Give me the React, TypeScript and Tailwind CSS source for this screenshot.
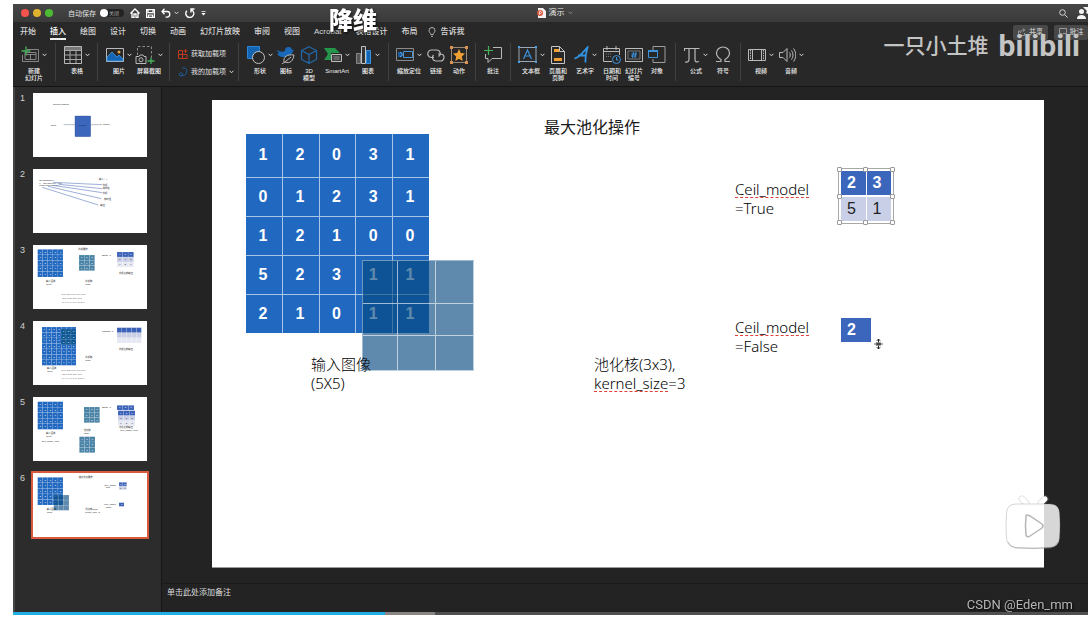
import type { ReactNode } from 'react'

type IconItem = {
  label: string[]
  icon: ReactNode
  width: string
  menu?: boolean
}

const tabs = ['开始', '插入', '绘图', '设计', '切换', '动画', '幻灯片放映', '审阅', '视图', 'Acrobat', '表格设计', '布局']

const inputGrid = [
  [1, 2, 0, 3, 1],
  [0, 1, 2, 3, 1],
  [1, 2, 1, 0, 0],
  [5, 2, 3, 1, 1],
  [2, 1, 0, 1, 1],
]

const played = 34.6
const buffered = 39.3

function Icon({ children, w = 18 }: { children: ReactNode; w?: number }) {
  return (
    <svg width={w} height={18} viewBox={`0 0 ${w} 18`} fill="none" stroke="#b9b9b9" strokeWidth="1" aria-hidden="true">
      {children}
    </svg>
  )
}

function Chevron({ color = '#d8d8d8' }: { color?: string }) {
  return (
    <svg width="5" height="4" viewBox="0 0 5 4" fill="none" stroke={color} aria-hidden="true">
      <path d="M.6 .8 2.5 2.8 4.4 .8" />
    </svg>
  )
}

const newSlide: IconItem = {
  label: ['新建', '幻灯片'],
  width: 'w-[34px]',
  menu: true,
  icon: (
    <Icon>
      <path d="M6 3.5h11.5v12H1.5V9M4 13V6.500h11v7H4M4 8.500h11M9.500 8.500v5" stroke="#858585" />
      <path d="M5 .5v9M.5 5h9" stroke="#45b35c" strokeWidth="1.300" />
    </Icon>
  ),
}

const tableItem: IconItem = {
  label: ['表格'],
  width: 'w-[34px]',
  menu: true,
  icon: (
    <Icon>
      <path d="M.5 .5h17v17H.5z" />
      <path d="M1 1h16v3H1z" fill="#777" stroke="none" />
      <path d="M.5 4.500h17M.5 9h17M.5 13.500h17M6 4v13M12 4v13" stroke="#a5a5a5" />
    </Icon>
  ),
}

const media: IconItem[] = [
  {
    label: ['图片'],
    width: 'w-[34px]',
    menu: true,
    icon: (
      <Icon>
        <path d="M.5 2.500h17v13H.5z" />
        <path d="M1 15v-4l5-5 5 5 2-2 4 4v2z" fill="#1465b4" stroke="#4aa3e8" strokeWidth=".7" />
        <circle cx="13" cy="6" r="1.500" fill="#f0a23b" stroke="none" />
      </Icon>
    ),
  },
  {
    label: ['屏幕截图'],
    width: 'w-[26px]',
    menu: true,
    icon: (
      <Icon w={20}>
        <path d="M2.500 9V.5h14v11" strokeDasharray="2.500 2" stroke="#8d8d8d" />
        <path d="M1 10.500h3l1-1.500h3l1 1.500h2v7H1z" />
        <circle cx="6" cy="13.800" r="2" />
        <path d="M16 11.500v7M12.500 15h7" stroke="#45b35c" strokeWidth="1.300" />
      </Icon>
    ),
  },
]

const illustrations: IconItem[] = [
  {
    label: ['形状'],
    width: 'w-[34px]',
    menu: true,
    icon: (
      <Icon>
        <path d="M.5 .5h12v12H.5z" fill="#1464b4" stroke="#2d84d6" />
        <circle cx="11.500" cy="11.500" r="6" fill="#282828" stroke="#c4c4c4" />
      </Icon>
    ),
  },
  {
    label: ['图标'],
    width: 'w-[18px]',
    icon: (
      <Icon>
        <path d="M0 4c3 2 6 2 8 1a3.500 3.500 0 1 1 7-1l2-.500-1.500 2.500C15 9 11 11 7 11 3 11 .5 9.500 .5 7.500l2-.5C.5 6 0 5 0 4z" fill="#1969b8" stroke="none" />
        <path d="M7 16c-1-5 3-8 10-7-1 6-4 9-9 7l6-5M8 16l-3 2" fill="#282828" stroke="#bdbdbd" />
      </Icon>
    ),
  },
  {
    label: ['3D', '模型'],
    width: 'w-[28px]',
    icon: (
      <Icon>
        <path d="M9 .7 16.500 4.500v9L9 17.300 1.500 13.500v-9zM1.500 4.500 9 8.500l7.500-4M9 8.500v8.800" stroke="#2369a9" strokeWidth="1.200" />
      </Icon>
    ),
  },
  {
    label: ['SmartArt'],
    width: 'w-[28px]',
    menu: true,
    icon: (
      <Icon>
        <path d="M0 2h11l5 5h-9v7H0l4-6z" fill="#24954b" stroke="none" />
        <path d="M7.500 8.500h10v7h-10z" fill="#3c3c3c" stroke="#bcbcbc" />
        <path d="M9.500 11h6M9.500 13h6" stroke="#8c8c8c" />
      </Icon>
    ),
  },
  {
    label: ['图表'],
    width: 'w-[34px]',
    menu: true,
    icon: (
      <Icon w={16}>
        <path d="M.5 7.500h4v10h-4z" fill="#555" stroke="#888" />
        <path d="M5.500 .5h4v17h-4z" fill="#333" stroke="#c4c4c4" />
        <path d="M10.500 4.500h4v13h-4z" fill="#1464b4" stroke="#3d93dc" />
      </Icon>
    ),
  },
]

const links: IconItem[] = [
  {
    label: ['缩放定位'],
    width: 'w-[32px]',
    menu: true,
    icon: (
      <Icon>
        <path d="M.5 2.500h17v12H.5z" stroke="#8b8b8b" />
        <path d="M7.500 5.500h9v6h-9z" stroke="#4b94d3" />
        <path d="M2 6h4v5H2z" fill="#1a5d9f" stroke="none" />
        <path d="m4 6 3 2.500L4 11" stroke="#66aee8" />
      </Icon>
    ),
  },
  {
    label: ['链接'],
    width: 'w-[22px]',
    icon: (
      <Icon>
        <path d="M7 11.500H4.500a3.500 3.500 0 0 1 0-7.500h5a3.500 3.500 0 0 1 2 6.500M11 8h2.500a3.500 3.500 0 0 1 0 7H8.500a3.500 3.500 0 0 1-2-6" strokeWidth="1.200" />
      </Icon>
    ),
  },
  {
    label: ['动作'],
    width: 'w-[24px]',
    icon: (
      <Icon>
        <path d="M1.500 1.500h15v15h-15z" stroke="#9a8877" />
        <path d="m9 3 1.800 4 4.200.5-3.200 3 .9 4.500L9 12.700 5.300 15l.9-4.500L3 7.500 7.200 7z" fill="#f0a033" stroke="none" />
        <path d="M0 0h3v3H0zM15 0h3v3h-3zM0 15h3v3H0zM15 15h3v3h-3z" fill="#db9150" stroke="none" />
      </Icon>
    ),
  },
]

const comment: IconItem[] = [
  {
    label: ['批注'],
    width: 'w-[26px]',
    icon: (
      <Icon>
        <path d="M9 1.500h8.500v11H8l-4 4v-4H1.500V8" />
        <path d="M4.500 0v9M0 4.500h9" stroke="#45b35c" strokeWidth="1.200" />
      </Icon>
    ),
  },
]

const textItems: IconItem[] = [
  {
    label: ['文本框'],
    width: 'w-[32px]',
    menu: true,
    icon: (
      <Icon w={19}>
        <path d="M1 1.500h17v14H1z" stroke="#9aa8b5" />
        <path d="M5.500 13 9.500 4l4 9M7 10h5" stroke="#3b93dc" strokeWidth="1.200" />
        <path d="M0 0h2v2H0zM17 0h2v2h-2zM0 15h2v2H0zM17 15h2v2h-2z" fill="#4ba0e5" stroke="none" />
      </Icon>
    ),
  },
  {
    label: ['页眉和', '页脚'],
    width: 'w-[22px]',
    icon: (
      <Icon w={14}>
        <path d="M.5 .5h8l5 5v12H.5zM8.500 .5v5h5" stroke="#c5c5c5" />
        <path d="M3 3h5v3H3zM3 12h8v3H3z" fill="#f0a033" stroke="none" />
      </Icon>
    ),
  },
  {
    label: ['艺术字'],
    width: 'w-[32px]',
    menu: true,
    icon: (
      <Icon w={15}>
        <path d="M.5 12.500C5 12 9 6 13.500 1.500 12 7 11 11 11.500 16.500M4 9.500h8" stroke="#3292e2" strokeWidth="1.800" />
      </Icon>
    ),
  },
  {
    label: ['日期和', '时间'],
    width: 'w-[22px]',
    icon: (
      <Icon>
        <path d="M9 15.500H.5v-13h16V9M.5 5.500h16M4 0v4M13 0v4" />
        <path d="M3 8h6M3 10.500h5" stroke="#777" strokeDasharray="1 1" />
        <circle cx="13.500" cy="13.500" r="4" fill="#282828" stroke="#3d94dc" />
        <path d="M13.500 11v3h2" stroke="#3d94dc" />
      </Icon>
    ),
  },
  {
    label: ['幻灯片', '编号'],
    width: 'w-[22px]',
    icon: (
      <Icon>
        <path d="M.5 2.500h17v13H.5z" stroke="#bdbdbd" />
        <path d="M3 5h12v8H3z" stroke="#777" />
        <path d="m8.500 6-1 6M11 6l-1 6M6.500 8h5.500M6 10h5.500" stroke="#3b93dc" />
      </Icon>
    ),
  },
  {
    label: ['对象'],
    width: 'w-[24px]',
    icon: (
      <Icon>
        <path d="M5 4V.5h12v16H5V13" stroke="#9d9d9d" />
        <path d="M.5 4.500h9v7h-9z" fill="#282828" stroke="#3b93dc" />
        <path d="M0 4h10v2H0z" fill="#3b93dc" stroke="none" />
      </Icon>
    ),
  },
]

const symbols: IconItem[] = [
  {
    label: ['公式'],
    width: 'w-[32px]',
    menu: true,
    icon: (
      <Icon w={16}>
        <path d="M.5 5V2.500h15M5 2.500v10c0 3-1 4-4 3.500M11 2.500v11c0 2 1 3 4 2" strokeWidth="1.200" />
      </Icon>
    ),
  },
  {
    label: ['符号'],
    width: 'w-[22px]',
    icon: (
      <Icon w={16}>
        <path d="M1 15.500h5v-2C2 11 1.500 8.500 1.500 7a6.500 6 0 0 1 13 0c0 1.500-.5 4-4.500 6.500v2h5" strokeWidth="1.200" />
      </Icon>
    ),
  },
]

const mediaClips: IconItem[] = [
  {
    label: ['视频'],
    width: 'w-[32px]',
    menu: true,
    icon: (
      <Icon>
        <path d="M.5 3.500h17v11H.5zM4.500 3.500v11M13.500 3.500v11" />
        <path d="M2.500 4v10M15.500 4v10" strokeDasharray="1.500 1" />
      </Icon>
    ),
  },
  {
    label: ['音频'],
    width: 'w-[28px]',
    menu: true,
    icon: (
      <Icon w={17}>
        <path d="M.5 6.500H4l4-4v13l-4-4H.5zM10.500 6.500c1 1.500 1 3.500 0 5M12.500 4.500c2 2.500 2 6.500 0 9M14.500 2.500c3 4 3 9 0 13" />
      </Icon>
    ),
  },
]

function RibbonButton({ item }: { item: IconItem }) {
  return (
    <button className={`${item.width} flex shrink-0 flex-col items-center`}>
      <span className="flex h-[18px] items-center gap-[3px]">
        {item.icon}
        {item.menu && <Chevron />}
      </span>
      <span className="mt-[4px] text-[6px] leading-[7px] font-medium whitespace-nowrap text-[#f0f0f0]">
        {item.label.map((line) => (
          <span key={line} className="block text-center">
            {line}
          </span>
        ))}
      </span>
    </button>
  )
}

function RibbonGroup({ items, width, last }: { items: IconItem[]; width: string; last?: boolean }) {
  return (
    <div className={`${width} flex h-[38px] shrink-0 border-[#404040] pt-[3px] pl-1 ${last ? '' : 'border-r'}`}>
      {items.map((item) => (
        <RibbonButton key={item.label[0]} item={item} />
      ))}
    </div>
  )
}

function TitleBar() {
  return (
    <div className="relative flex h-[18px] items-center bg-linear-to-b from-[#474747] to-[#3a3a3a] pl-2">
      <div className="flex gap-1">
        <button aria-label="关闭窗口" className="size-2 rounded-full bg-[#f5534b]" />
        <button aria-label="最小化" className="size-2 rounded-full bg-[#dfb32e]" />
        <button aria-label="缩放" className="size-2 rounded-full bg-[#4cba33]" />
      </div>
      <label className="ml-[15px] flex items-center gap-1 text-[7px] leading-none text-[#e0e0e0]">
        自动保存
        <span className="relative flex h-2 w-6 items-center rounded-full bg-[#222]">
          <input type="checkbox" className="size-2 appearance-none rounded-full bg-white" />
          <span className="ml-px text-[5px] text-[#aaa]">关闭</span>
        </span>
      </label>
      <div className="ml-[6px] flex items-center gap-[6px] text-white">
        <button aria-label="主页">
          <svg width="10" height="10" viewBox="0 0 10 10" fill="none" stroke="currentColor" strokeWidth="1.300">
            <path d="M.5 5.500 5 1l4.500 4.500M2 4.500v5h2V6h2v3.500h2v-5" />
          </svg>
        </button>
        <button aria-label="保存">
          <svg width="9" height="9" viewBox="0 0 9 9" fill="none" stroke="currentColor" strokeWidth="1.200">
            <path d="M.6.6h7.800v7.800H.6zM2 .6v3h5v-3M2.500 8.400V6h4v2.400" />
          </svg>
        </button>
        <button aria-label="撤消" className="flex items-center gap-[3px]">
          <svg width="10" height="10" viewBox="0 0 10 10" fill="none" stroke="currentColor" strokeWidth="1.300">
            <path d="M3.500 .8 1 3.500l2.500 2.700M1 3.500h5a2.800 2.800 0 0 1 0 5.600H4.500" />
          </svg>
          <Chevron />
        </button>
        <button aria-label="恢复">
          <svg width="10" height="10" viewBox="0 0 10 10" fill="none" stroke="currentColor" strokeWidth="1.400">
            <path d="M1.800 2.800a4 4 0 1 0 5-.8M9.500 1H6v3.500" />
          </svg>
        </button>
        <button aria-label="自定义工具栏">
          <svg width="5" height="5" viewBox="0 0 5 5" fill="currentColor">
            <path d="M.5 0h4v.8h-4zM.3 2h4.400L2.500 4.500z" />
          </svg>
        </button>
      </div>
      <div className="absolute inset-x-0 flex justify-center pl-2 text-[8px] leading-none text-[#e6e6e6]">
        <span className="flex items-center gap-[3px]">
          <svg width="9" height="10" viewBox="0 0 9 10" aria-hidden="true">
            <path d="M1 0h5l3 3v7H1z" fill="#f5eeee" />
            <circle cx="3" cy="5" r="3" fill="#d8553c" />
            <path d="M2.400 6.800V3.500h1.100a1 1 0 0 1 0 2H2.400" stroke="#fff" strokeWidth=".7" fill="none" />
          </svg>
          演示
          <Chevron color="#858585" />
        </span>
      </div>
      <div className="ml-auto flex items-center gap-[9px]">
        <button aria-label="搜索">
          <svg width="9" height="9" viewBox="0 0 9 9" fill="none" stroke="#d5d5d5">
            <circle cx="3.500" cy="3.500" r="2.800" />
            <path d="m5.600 5.600 3 3" />
          </svg>
        </button>
        <svg width="11" height="12" viewBox="0 0 11 12" fill="#f5f5f5" aria-hidden="true">
          <circle cx="4.500" cy="4.500" r="2.500" />
          <path d="M0 12c0-3 2-4 4.500-4S9 9 9 12zM6 0h5v7L9 6l1-2z" />
        </svg>
      </div>
    </div>
  )
}

function Tabs() {
  return (
    <nav className="flex h-5 items-center gap-[14px] pl-[7px] text-[8px] leading-3 font-medium text-[#d6d6d6]">
      {tabs.map((tab) => (
        <button
          key={tab}
          className={`shrink-0 border-y-2 border-t-transparent ${tab === '插入' ? 'border-b-[#eee] text-white' : 'border-b-transparent'}`}
        >
          {tab}
        </button>
      ))}
      <button className="-ml-1 flex shrink-0 items-center gap-[5px]">
        <svg width="8" height="10" viewBox="0 0 8 10" fill="none" stroke="#bdbdbd" strokeWidth=".9" aria-hidden="true">
          <path d="M2.800 7.500C2.800 6 1 5.500 1 3.500a3 3 0 0 1 6 0c0 2-1.800 2.500-1.800 4zM3 9.300h2" />
        </svg>
        告诉我
      </button>
      <div className="ml-auto flex shrink-0 gap-[6px] text-[7px] text-[#ccc]">
        <button className="flex h-[15px] w-[35px] items-center justify-center gap-[3px] rounded-xs bg-[#484848]">
          <svg width="8" height="8" viewBox="0 0 8 8" fill="none" stroke="#999" aria-hidden="true">
            <path d="M2.500 3H.5v4.500h6V5M2.500 5c0-2 1-3 4-3M5 .5 6.800 2 5 3.500" />
          </svg>
          共享
        </button>
        <button className="flex h-[15px] w-[34px] items-center justify-center gap-[3px] rounded-xs bg-[#484848]">
          <svg width="8" height="8" viewBox="0 0 8 8" fill="none" stroke="#999" aria-hidden="true">
            <path d="M.5 .5h7v5H4L2.500 7V5.500h-2z" />
          </svg>
          批注
        </button>
      </div>
    </nav>
  )
}

function Ribbon() {
  return (
    <div className="flex h-11 overflow-hidden pt-px">
      <RibbonGroup items={[newSlide]} width="w-[43px]" />
      <RibbonGroup items={[tableItem]} width="w-[42px]" />
      <RibbonGroup items={media} width="w-[72px]" />
      <div className="flex h-[38px] w-[69px] shrink-0 flex-col justify-around border-r border-[#404040] pt-[2px] pl-2 text-[7px] leading-[10px] text-[#e2e2e2]">
        <button className="flex items-center gap-[3px] whitespace-nowrap">
          <svg width="10" height="10" viewBox="0 0 10 10" fill="none" stroke="#c23a1d" aria-hidden="true">
            <path d="M.5 1.500h4v8h-4zM.5 5.500h8.500v4H4.500M7.500 0v4M5.500 2h4" />
          </svg>
          获取加载项
        </button>
        <button className="flex items-center gap-[3px] whitespace-nowrap">
          <svg width="10" height="10" viewBox="0 0 10 10" fill="none" stroke="#1d5792" aria-hidden="true">
            <path d="M4 1h3l2 2-1 4-2 1.500H3M3 5.500 1 7l1 2h2l1-2z" />
          </svg>
          我的加载项
          <Chevron />
        </button>
      </div>
      <RibbonGroup items={illustrations} width="w-[150px]" />
      <RibbonGroup items={links} width="w-[87px]" />
      <RibbonGroup items={comment} width="w-[35px]" />
      <RibbonGroup items={textItems} width="w-[165px]" />
      <RibbonGroup items={symbols} width="w-[65px]" />
      <RibbonGroup items={mediaClips} width="w-[70px]" last />
    </div>
  )
}

type MiniGridProps = {
  x: number
  y: number
  w: number
  h: number
  rows: number
  cols: number
  fills: string[]
  blank?: boolean
}

function MiniGrid({ x, y, w, h, rows, cols, fills, blank }: MiniGridProps) {
  const cw = w / cols
  const ch = h / rows
  const cells = Array.from({ length: rows * cols }, (_, i) => ({ r: Math.floor(i / cols), c: i % cols }))
  return (
    <g>
      {cells.map(({ r, c }) => {
        const fill = fills[Math.min(r, fills.length - 1)]
        return (
          <g key={`${r}-${c}`}>
            <rect x={x + c * cw} y={y + r * ch} width={cw} height={ch} fill={fill} stroke="#ffffff" strokeOpacity=".35" />
            {!blank && (
              <text x={x + (c + 0.5) * cw} y={y + (r + 0.5) * ch + 2} fontSize="6" fontWeight="bold" textAnchor="middle" fill={fill.startsWith('#c') || fill.startsWith('#e') ? '#333' : '#fff'}>
                {inputGrid[r % 5][c % 5]}
              </text>
            )}
          </g>
        )
      })}
    </g>
  )
}

const BLUE = '#2168c0'
const TEAL = '#4b84a6'
const output = ['#3b62b8', '#c9cfe5', '#e6e8f3']

function Formulas() {
  return (
    <>
      <text x="85" y="150" fill="#555">1x1+2x2+0x1+0x0+1x1</text>
      <text x="85" y="162" fill="#555">+2x0+1x2+2x1+1x0</text>
      <text x="83" y="173" fill="#555">=1+4+0+0+1+0+2+2+0</text>
    </>
  )
}

const thumbnails: ReactNode[] = [
  <>
    <text x="61" y="35">Neural network</text>
    <text x="53" y="98">Input</text>
    <path d="M92 95h34M174 95h33" stroke="#b9c0cc" strokeWidth="3" />
    <rect x="126" y="69" width="47" height="62" fill="#3b66bc" stroke="#2b4a8c" />
    <text x="137" y="98" fill="#1b2f5e">forward</text>
    <text x="210" y="96">output</text>
  </>,
  <>
    <text x="19" y="37">def forward(x):</text>
    <text x="19" y="44">x = self.conv1(x), relu</text>
    <text x="19" y="51">return self.conv2(x)</text>
    <path d="M60 40 208 47M78 46l130 13M60 49l148 22M45 52l160 37M28 55l168 53" stroke="#6c88c4" strokeWidth="2" fill="none" />
    <text x="198" y="33">输入：x</text>
    <text x="209" y="50">卷积</text>
    <text x="209" y="61">非线性</text>
    <text x="209" y="74">卷积</text>
    <text x="213" y="92">非线性</text>
    <text x="202" y="110">输出</text>
  </>,
  <>
    <text x="136" y="14">卷积操作</text>
    <MiniGrid x={14} y={13} w={76} h={83} rows={5} cols={5} fills={[BLUE]} />
    <MiniGrid x={138} y={30} w={47} h={47} rows={3} cols={3} fills={[TEAL]} />
    <text x="207" y="33">Stride=1</text>
    <MiniGrid x={252} y={21} w={50} h={45} rows={3} cols={3} fills={output} />
    <text x="258" y="88">卷积后的输出</text>
    <text x="39" y="112">输入图像</text>
    <text x="39" y="119">(5X5)</text>
    <text x="157" y="112">卷积核</text>
    <text x="157" y="119">(3x3)</text>
    <Formulas />
  </>,
  <>
    <MiniGrid x={27} y={18} w={102} h={115} rows={7} cols={7} fills={[BLUE]} />
    <MiniGrid x={84} y={24} w={45} h={47} rows={3} cols={3} fills={['#0f5894']} />
    <text x="207" y="33">padding=1</text>
    <MiniGrid x={252} y={20} w={73} h={46} rows={3} cols={5} fills={output} blank />
    <text x="258" y="88">卷积后的输出</text>
    <text x="157" y="112">卷积核</text>
    <text x="157" y="119">(3x3)</text>
    <text x="42" y="145">输入图像</text>
    <text x="42" y="152">(5X5)</text>
    <Formulas />
  </>,
  <>
    <MiniGrid x={14} y={14} w={76} h={83} rows={5} cols={5} fills={[BLUE]} />
    <MiniGrid x={153} y={30} w={47} h={47} rows={3} cols={3} fills={[TEAL]} />
    <text x="207" y="33">Stride=1</text>
    <MiniGrid x={252} y={25} w={51} h={14} rows={1} cols={3} fills={output} />
    <MiniGrid x={255} y={41} w={51} h={45} rows={3} cols={3} fills={output} />
    <text x="258" y="92">池化后的输出</text>
    <text x="262" y="101">Ceil_model=True</text>
    <text x="39" y="112">输入图像</text>
    <text x="39" y="119">(5X5)</text>
    <text x="26" y="134">Ceil_model=True</text>
    <text x="152" y="103">池化核</text>
    <text x="152" y="110">(3x3)</text>
    <MiniGrid x={139} y={119} w={47} h={48} rows={3} cols={3} fills={[TEAL]} />
  </>,
  <>
    <text x="137" y="14">最大池化操作</text>
    <MiniGrid x={14} y={13} w={76} h={83} rows={5} cols={5} fills={[BLUE]} />
    <MiniGrid x={62} y={66} w={46} h={46} rows={3} cols={3} fills={['rgba(5,72,127,0.64)']} blank />
    <text x="41" y="112">输入图像</text>
    <text x="41" y="119">(5X5)</text>
    <text x="157" y="112">池化核(3x3),</text>
    <text x="157" y="119">kernel_size=3</text>
    <text x="214" y="39">Ceil_model</text>
    <text x="214" y="46">=True</text>
    <MiniGrid x={258} y={28} w={23} h={22} rows={2} cols={2} fills={output} />
    <text x="214" y="97">Ceil_model</text>
    <text x="214" y="104">=False</text>
    <MiniGrid x={258} y={89} w={15} h={11} rows={1} cols={1} fills={output} />
  </>,
]

function SlideList() {
  return (
    <ol className="flex w-[149px] shrink-0 flex-col gap-3 border-r border-l-2 border-r-[#151515] border-l-[#454545] bg-[#2c2c2c] pt-[6px] pl-[5px]">
      {thumbnails.map((drawing, i) => (
        <li key={i} className="flex items-start gap-[7px]">
          <span className="w-[6px] text-[9px] leading-[10px] text-[#d0d0d0]">{i + 1}</span>
          <button
            aria-label={`幻灯片 ${i + 1}`}
            className={`bg-white outline-[#d9593f] ${i === 5 ? 'outline-2' : ''}`}
          >
            <svg width="114" height="64" viewBox="0 0 342 192" fontSize="7" fill="#111">
              {drawing}
            </svg>
          </button>
        </li>
      ))}
    </ol>
  )
}

function InputMatrix() {
  return (
    <table className="absolute top-[34px] left-[34px] w-[183px] table-fixed border-collapse bg-[#2168c0] text-center text-[16px] font-bold text-white">
      <tbody>
        {inputGrid.map((row, r) => (
          <tr key={r} className={r === 0 ? 'h-[43px]' : 'h-[39px]'}>
            {row.map((value, c) => (
              <td key={c} className="border border-[#a9c5e6] p-0 pr-[2px] [tr:first-child>&]:border-t-0 [tr:last-child>&]:border-b-0 first:border-l-0 last:border-r-0">
                {value}
              </td>
            ))}
          </tr>
        ))}
      </tbody>
    </table>
  )
}

function KernelOverlay() {
  return (
    <div className="absolute top-[160px] left-[150px] grid h-[111px] w-[112px] grid-cols-[35px_38px_38px] grid-rows-[43px_32px_35px] border-t border-l border-white/40 bg-[rgba(5,72,127,0.64)]">
      {Array.from({ length: 9 }, (_, i) => (
        <div key={i} className="border-r border-b border-white/60" />
      ))}
    </div>
  )
}

// selection frame: eight handles, no centre one
function SelectedTable() {
  return (
    <div className="absolute top-[68px] left-[626px] h-14 w-14 border border-[#a8a8a8] p-[2px]">
      <table className="size-full table-fixed border-collapse text-[16px] leading-none">
        <tbody>
          <tr className="bg-[#3b66bc] font-bold text-white">
            <td className="border-r border-b-2 border-white p-0 pl-[6px]">2</td>
            <td className="border-b-2 border-white p-0 pl-[6px]">3</td>
          </tr>
          <tr className="bg-[#c9cfe6] text-[#222]">
            <td className="border-r border-white p-0 pl-[6px]">5</td>
            <td className="p-0 pl-[6px]">1</td>
          </tr>
        </tbody>
      </table>
      <div className="absolute -inset-[2px] grid grid-cols-3 content-between">
        {['nw', 'n', 'ne', 'w', 'c', 'e', 'sw', 's', 'se'].map((spot, i) => (
          <span
            key={spot}
            className={`size-[5px] ${spot === 'c' ? '' : 'rounded-[1px] border border-[#999] bg-white'} ${i % 3 === 1 ? 'justify-self-center' : ''} ${i % 3 === 2 ? 'justify-self-end' : ''}`}
          />
        ))}
      </div>
    </div>
  )
}

function Misspelt({ children }: { children: ReactNode }) {
  return <span className="inline-block h-[18px] border-b border-dashed border-[#e0403c]">{children}</span>
}

function TextBox({ place, children }: { place: string; children: ReactNode }) {
  return (
    <p className={`${place} absolute font-['Noto_Sans','Noto_Sans_CJK_SC',sans-serif] text-[15px] leading-[19px] font-light whitespace-nowrap text-black`}>
      {children}
    </p>
  )
}

function Slide() {
  return (
    <div className="relative aspect-video border-b border-[#9a9a9a] bg-white text-[#1c1c1c]">
      <h1 className="absolute top-[18px] left-[332px] text-[16px] leading-[19px]">最大池化操作</h1>
      <InputMatrix />
      <KernelOverlay />
      <TextBox place="top-[255px] left-[99px]">
        输入图像
        <br />
        (5X5)
      </TextBox>
      <TextBox place="top-[255px] left-[382px]">
        池化核(3x3),
        <br />
        <Misspelt>kernel_size</Misspelt>=3
      </TextBox>
      <TextBox place="top-[80px] left-[523px]">
        <Misspelt>Ceil_model</Misspelt>
        <br />
        =True
      </TextBox>
      <TextBox place="top-[218px] left-[523px]">
        <Misspelt>Ceil_model</Misspelt>
        <br />
        =False
      </TextBox>
      <SelectedTable />
      <div className="absolute top-[218px] left-[629px] flex h-6 w-[30px] items-center bg-[#3b66bc] pl-[6px] text-[16px] font-bold text-white">
        2
      </div>
      <svg className="absolute top-[238px] left-[661px]" width="11" height="12" viewBox="0 0 11 12" fill="none" stroke="#222" aria-hidden="true">
        <path d="M5.500 1v10M3.800 2.800 5.500 1l1.700 1.800M3.800 9.200 5.500 11l1.700-1.800" />
        <path d="M1 6h9" stroke="#666" />
        <path d="M3 4.500h5v3H3z" fill="#444" stroke="#aaa" strokeWidth=".6" />
      </svg>
    </div>
  )
}

export default function App() {
  return (
    <div className="flex min-h-screen flex-col bg-white pt-1 pb-[7px] pl-[13px] font-['Liberation_Sans','Noto_Sans_CJK_SC',sans-serif]">
      <div className="relative flex flex-1 flex-col overflow-hidden bg-[#232323]">
        <header className="relative border-b border-[#131313] bg-[#282828]">
          <TitleBar />
          <Tabs />
          <Ribbon />
          <strong className="absolute top-[3px] left-[316px] text-[24px] leading-[28px] font-black text-white drop-shadow-[1px_1px_1px_rgba(0,0,0,0.7)]">
            降维
          </strong>
          <div className="absolute top-[18px] right-2 flex items-center gap-[10px] text-[#c4c4c4]">
            <span className="text-[21px] leading-[48px] font-medium">一只小土堆</span>
            <span className="font-['Roboto','Liberation_Sans',sans-serif] text-[30px] leading-[48px] font-bold">bilibili</span>
          </div>
        </header>
        <div className="flex flex-1">
          <SlideList />
          <main className="flex min-w-0 flex-1 flex-col">
            <div className="flex-1 pt-[13px] pr-11 pb-[15px] pl-[50px]">
              <Slide />
            </div>
            <textarea
              aria-label="备注"
              placeholder="单击此处添加备注"
              className="block h-[29px] w-full resize-none border-t border-[#1a1a1a] px-[5px] pt-1 text-[8px] leading-[10px] outline-none placeholder:text-[#dedede]"
            />
          </main>
        </div>
        <svg className="absolute right-[26px] bottom-[60px]" width="58" height="58" viewBox="0 0 58 58" aria-hidden="true">
          <path d="m18 5 4 4M41 5l-4 4" stroke="#aaa" strokeWidth="7" strokeLinecap="round" opacity=".3" />
          <path d="m18 5 4 4M41 5l-4 4" stroke="#fff" strokeWidth="5" strokeLinecap="round" />
          <path
            d="M12 10h34q9 0 9.500 9 1 12 0 25-.5 9-9.500 9.500-17 1-34 0Q3 53 2.500 44q-1-13 0-25Q3 10 12 10z"
            fill="#fff"
            fillOpacity=".82"
            stroke="#777"
            strokeOpacity=".3"
          />
          <path d="M4 48q2 5 8 6 17 1 34 0 6-1 8-6" fill="none" stroke="#888" strokeOpacity=".5" />
          <path d="M22 22q-1 10 0 19 1 3 4 1l12-8q2-2 0-4l-12-8q-4-2-4 0z" fill="#fff" fillOpacity=".2" stroke="#b5b5b5" strokeWidth="1.500" />
        </svg>
        <span className="absolute right-[15px] bottom-0 font-['Roboto','Liberation_Sans',sans-serif] text-[13px] leading-[14px] text-[#b5b5b5] drop-shadow-[1px_1px_1px_#000]">
          CSDN @Eden_mm
        </span>
      </div>
      <div role="progressbar" aria-label="播放进度" aria-valuenow={played} className="relative h-[3px] bg-[#505050]">
        <div className="absolute inset-y-0 left-0 bg-[#8a8583]" style={{ width: `${buffered}%` }} />
        <div className="absolute inset-y-0 left-0 bg-[#23ade5]" style={{ width: `${played}%` }} />
      </div>
    </div>
  )
}
